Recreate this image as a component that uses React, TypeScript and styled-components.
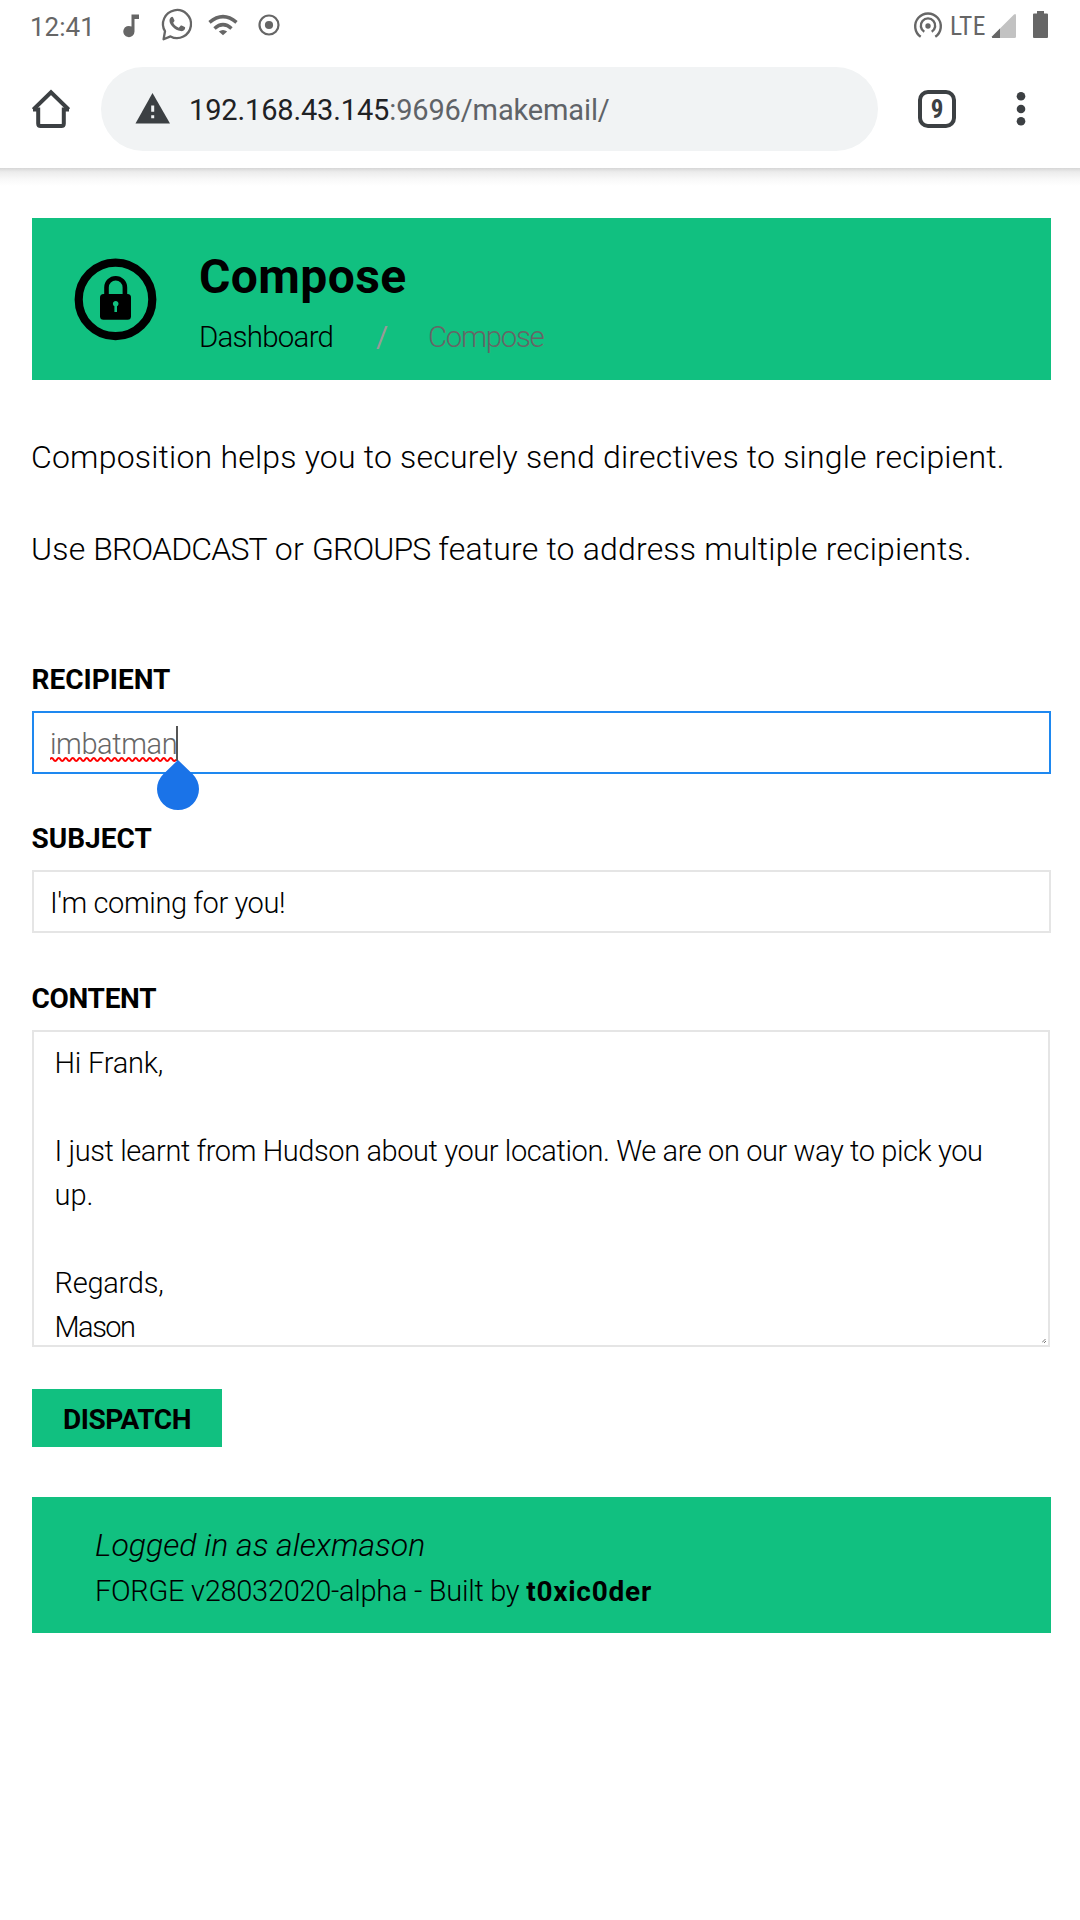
import React from "react";
import styled, { createGlobalStyle } from "styled-components";

const GREEN = "#11c080";

const GlobalStyle = createGlobalStyle`
  * { box-sizing: border-box; }
  body {
    margin: 0;
    background: #fff;
    color: #000;
    font-family: Roboto, "Liberation Sans", sans-serif;
    font-weight: 300;
  }
  h1, p { margin: 0; }
  svg { display: block; flex: none; }
`;

const Screen = styled.div`
  display: flex;
  flex-direction: column;
  width: 1080px;
  min-height: 1920px;
`;

/* Phone chrome */

const StatusBar = styled.header`
  display: flex;
  justify-content: space-between;
  height: 50px;
  padding: 0 32px 0 30px;
  color: #666;
`;

const StatusGroup = styled.div`
  display: flex;
  align-items: center;
  height: 52px;
`;

const Clock = styled.span`
  width: 93px;
  padding-top: 1px;
  font-size: 26px;
  font-weight: 400;
`;

const Network = styled.span`
  width: 42px;
  padding-left: 7px;
  font-family: "Roboto Condensed", Roboto, sans-serif;
  font-size: 25.5px;
  font-weight: 400;
  letter-spacing: 0.4px;
`;

const Toolbar = styled.nav`
  display: flex;
  align-items: center;
  height: 118px;
  padding: 0 50px 0 32px;
`;

const AddressBar = styled.div`
  display: flex;
  align-items: center;
  width: 777px;
  height: 84px;
  margin: 0 40px 0 31px;
  padding-left: 34px;
  border-radius: 42px;
  background: #f1f3f4;
`;

const Url = styled.span`
  padding: 2px 0 0 18px;
  color: #5f6368;
  font-size: 29px;
  font-weight: 400;
  letter-spacing: -0.14px;
  white-space: nowrap;
`;

const Host = styled.span`
  color: #202124;
`;

const TabCount = styled.div`
  display: flex;
  align-items: center;
  justify-content: center;
  width: 38px;
  height: 38px;
  margin-right: 60px;
  padding-top: 2px;
  border: 4px solid #3c4043;
  border-radius: 10px;
  color: #3c4043;
  font-family: "Roboto Condensed", Roboto, sans-serif;
  font-size: 25px;
  font-weight: 700;
  line-height: 30px;
`;

const ToolbarShadow = styled.div`
  height: 18px;
  background: linear-gradient(#d6d6d6, #ececec 22%, #f8f8f8 60%, #fff);
`;

/* Page */

const Page = styled.main`
  display: flex;
  flex-direction: column;
  padding: 32px 29px 0 32px;
`;

const Banner = styled.section`
  display: flex;
  align-items: center;
  height: 162px;
  padding-left: 42px;
  background: ${GREEN};
`;

const BannerText = styled.div`
  display: flex;
  flex-direction: column;
  padding: 15px 0 0 41px;
`;

const Title = styled.h1`
  font-size: 48px;
  font-weight: 700;
  line-height: 60px;
  letter-spacing: 0.4px;
`;

const Crumbs = styled.div`
  display: flex;
  height: 60px;
  line-height: 60px;
  font-size: 29.5px;
`;

const Crumb = styled.span<{ $muted?: boolean; $width?: number; $spacing: number }>`
  width: ${(p) => (p.$width ? `${p.$width}px` : "auto")};
  color: ${(p) => (p.$muted ? "#666" : "#000")};
  letter-spacing: ${(p) => p.$spacing}px;
`;

const Slash = styled.span`
  width: 52px;
  color: #999;
  font-weight: 400;
`;

const Intro = styled.div`
  display: flex;
  flex-direction: column;
  gap: 46px;
  padding: 54px 0 92px;
`;

const Paragraph = styled.p<{ $spacing: number }>`
  height: 46px;
  margin-left: -1px;
  font-size: 32px;
  line-height: 46px;
  letter-spacing: ${(p) => p.$spacing}px;
  white-space: nowrap;
`;

const FeatureName = styled.span`
  letter-spacing: -0.85px;
`;

const Field = styled.div<{ $gap: number }>`
  display: flex;
  flex-direction: column;
  padding-bottom: ${(p) => p.$gap}px;
`;

const Label = styled.div<{ $spacing?: number }>`
  height: 47px;
  margin-left: -0.5px;
  line-height: 32px;
  font-size: 28px;
  font-weight: 700;
  letter-spacing: ${(p) => p.$spacing ?? 0}px;
`;

const Input = styled.div<{ $focused?: boolean }>`
  display: flex;
  align-items: center;
  height: 63px;
  padding: 2px 0 0 16px;
  border: 2px solid ${(p) => (p.$focused ? "#1e88f0" : "#e5e5e5")};
  color: ${(p) => (p.$focused ? "#666" : "#000")};
  font-size: 29px;
  line-height: 36px;
  letter-spacing: -0.4px;
  white-space: nowrap;
`;

const Misspelled = styled.span`
  position: relative;
  width: 126px;
`;

const Squiggle = styled.svg`
  position: absolute;
  left: 0;
  top: 31px;
`;

const Caret = styled.i`
  position: absolute;
  left: 126px;
  top: 0;
  width: 2px;
  height: 35px;
  background: #555;
`;

const Handle = styled.svg`
  position: absolute;
  left: 107px;
  top: 34px;
`;

const TextArea = styled.div`
  position: relative;
  width: 1018px;
  height: 317px;
  padding: 9px 20.5px;
  overflow: hidden;
  border: 2px solid #e5e5e5;
  font-size: 29px;
  line-height: 44px;
`;

const Line = styled.div<{ $spacing?: number }>`
  height: 44px;
  letter-spacing: ${(p) => p.$spacing ?? 0}px;
  white-space: nowrap;
`;

const Resizer = styled.svg`
  position: absolute;
  right: 2px;
  bottom: 2px;
`;

const Dispatch = styled.button`
  align-self: flex-start;
  width: 190px;
  height: 58px;
  padding: 3px 0 0;
  border: 0;
  background: ${GREEN};
  color: #000;
  font-family: inherit;
  font-size: 28px;
  font-weight: 700;
  letter-spacing: -0.45px;
`;

const Footer = styled.footer`
  display: flex;
  flex-direction: column;
  height: 136px;
  margin-top: 50px;
  padding: 25px 63px 0;
  background: ${GREEN};
  white-space: nowrap;
`;

const Session = styled.em`
  height: 46px;
  font-size: 32px;
  line-height: 46px;
`;

const Version = styled.div`
  height: 46px;
  font-size: 29px;
  line-height: 46px;
  letter-spacing: -0.29px;
`;

const Author = styled.strong`
  font-size: 28px;
  font-weight: 700;
  letter-spacing: 0.75px;
`;

const StatusIcons = () => (
  <svg width="160" height="52" viewBox="123 0 160 52" fill="#666">
    <path d="M131.5 14.5H139V19H134.5V31.5A5.6 5.6 0 1 1 131.5 26.6Z" />
    <path
      d="M163.6 39.2L165 31.2A14 14 0 1 1 170.5 36.4Z"
      fill="none"
      stroke="#666"
      strokeWidth="2.3"
      strokeLinejoin="round"
    />
    <path d="M171 17.3c.8-.8 1.6-.7 2-.1l1.4 3.1c.2.6 0 1.1-1.2 2.5 1.2 2.4 3 3.9 5.6 5l1.6-1.9c.4-.5.8-.5 1.3-.3l3 1.5c.6.4.5.6.3 1.7-.5 1.7-2.6 2.6-4.3 2.3-6.2-1.2-11-6.3-11.2-10.2-.1-1.5.6-2.7 1.5-3.6z" />
    <g fill="none" stroke="#666" strokeWidth="3.5">
      <path d="M209.5 22.3Q223 11 236.5 22.3" />
      <path d="M214.5 28.5Q223 20.8 231.5 28.5" />
    </g>
    <path d="M218.8 31.6Q223 28.3 227.2 31.6L223 35.2Z" />
    <circle cx="269" cy="25" r="9.5" fill="none" stroke="#666" strokeWidth="2.2" />
    <circle cx="269" cy="25" r="4.1" />
  </svg>
);

const HotspotIcon = () => (
  <svg width="30" height="52" viewBox="913 0 30 52" fill="none" stroke="#666" strokeWidth="2.4">
    <path d="M920.7 36.8A12.8 12.8 0 1 1 935.3 36.8" />
    <path d="M924.3 31.8A7.2 7.2 0 1 1 931.7 31.8" />
    <circle cx="928" cy="26" r="2.7" fill="#666" stroke="none" />
  </svg>
);

const SignalBatteryIcon = () => (
  <svg width="63" height="52" viewBox="985 0 63 52" fill="#666">
    <path d="M992 36.5L1014 14.5Q1016 13 1016 15.5V36.5Q1016 38 1014.5 38H993Q991.5 38 992 36.5Z" fill="#c2c2c2" />
    <path d="M1000 28.5V38H993Q991.5 38 992 36.5Z" />
    <path d="M1037 11H1044V13.6H1047Q1048 13.6 1048 14.6V37Q1048 38 1047 38H1034Q1033 38 1033 37V14.6Q1033 13.6 1034 13.6H1037Z" />
  </svg>
);

const HomeIcon = () => (
  <svg width="38" height="40" viewBox="0 0 38 40" fill="none" stroke="#3c4043" strokeWidth="4">
    <path d="M1.3 20.5L19 3.3L36.7 20.5" />
    <path d="M1 20.5H6.2V34.5Q6.2 37 8.7 37H29.3Q31.8 37 31.8 34.5V20.5H37" />
  </svg>
);

const WarningIcon = () => (
  <svg width="36" height="36" viewBox="0 0 36 36">
    <path d="M17.5 2L35 32.5H0.5Z" fill="#3c4043" />
    <path d="M16.2 14.5H19.2V20.8H16.2ZM16.2 24.2H19.2V27.3H16.2Z" fill="#f1f3f4" />
  </svg>
);

const MenuDots = () => (
  <svg width="10" height="38" viewBox="0 0 10 38" fill="#3c4043">
    <circle cx="5" cy="6.3" r="4.3" />
    <circle cx="5" cy="19" r="4.3" />
    <circle cx="5" cy="31.3" r="4.3" />
  </svg>
);

const LockLogo = () => (
  <svg width="84" height="84" viewBox="0 0 84 84">
    <circle cx="41.5" cy="42.4" r="36.8" fill="none" stroke="#000" strokeWidth="8.2" />
    <path d="M32.5 39V30.5a9.2 9.2 0 0 1 18.4 0V39" fill="none" stroke="#000" strokeWidth="4.6" />
    <rect x="26" y="37" width="31" height="25.8" rx="3.5" />
    <path d="M40.4 55V49.2a2.8 2.8 0 1 1 2.6 0V55Z" fill={GREEN} />
  </svg>
);

const wave = "M0 2.5" + " q1.75 -3 3.5 0 t3.5 0".repeat(18);

export default function App() {
  return (
    <Screen>
      <GlobalStyle />
      <StatusBar>
        <StatusGroup>
          <Clock>12:41</Clock>
          <StatusIcons />
        </StatusGroup>
        <StatusGroup>
          <HotspotIcon />
          <Network>LTE</Network>
          <SignalBatteryIcon />
        </StatusGroup>
      </StatusBar>
      <Toolbar>
        <HomeIcon />
        <AddressBar>
          <WarningIcon />
          <Url>
            <Host>192.168.43.145</Host>:9696/makemail/
          </Url>
        </AddressBar>
        <TabCount>9</TabCount>
        <MenuDots />
      </Toolbar>
      <ToolbarShadow />
      <Page>
        <Banner>
          <LockLogo />
          <BannerText>
            <Title>Compose</Title>
            <Crumbs>
              <Crumb $width={177} $spacing={-0.77}>Dashboard</Crumb>
              <Slash>/</Slash>
              <Crumb $muted $spacing={-1.35}>Compose</Crumb>
            </Crumbs>
          </BannerText>
        </Banner>
        <Intro>
          <Paragraph $spacing={0.2}>
            Composition helps you to securely send directives to single recipient.
          </Paragraph>
          <Paragraph $spacing={0.18}>
            Use <FeatureName>BROADCAST</FeatureName> or <FeatureName>GROUPS</FeatureName> feature to
            address multiple recipients.
          </Paragraph>
        </Intro>
        <Field $gap={49}>
          <Label>RECIPIENT</Label>
          <Input $focused>
            <Misspelled>
              imbatman
              <Squiggle width="126" height="5" viewBox="0 0 126 5">
                <path d={wave} fill="none" stroke="#f00" strokeWidth="2" />
              </Squiggle>
              <Caret />
              <Handle width="42" height="51" viewBox="0 0 42 51">
                <path d="M21 0L35.8 14.2A21 21 0 1 1 6.2 14.2Z" fill="#1a73e8" />
              </Handle>
            </Misspelled>
          </Input>
        </Field>
        <Field $gap={50}>
          <Label>SUBJECT</Label>
          <Input>I'm coming for you!</Input>
        </Field>
        <Field $gap={42}>
          <Label $spacing={-0.3}>CONTENT</Label>
          <TextArea>
            <Line $spacing={-0.2}>Hi Frank,</Line>
            <Line />
            <Line $spacing={-0.4}>
              I just learnt from Hudson about your location. We are on our way to pick you
            </Line>
            <Line>up.</Line>
            <Line />
            <Line $spacing={-0.25}>Regards,</Line>
            <Line $spacing={-1.5}>Mason</Line>
            <Resizer width="4" height="4" viewBox="0 0 4 4">
              <path d="M0 3.5L3.5 0M2 4L4 2" stroke="#555" strokeWidth="0.8" />
            </Resizer>
          </TextArea>
        </Field>
        <Dispatch>DISPATCH</Dispatch>
        <Footer>
          <Session>Logged in as alexmason</Session>
          <Version>
            FORGE v28032020-alpha - Built by <Author>t0xic0der</Author>
          </Version>
        </Footer>
      </Page>
    </Screen>
  );
}
